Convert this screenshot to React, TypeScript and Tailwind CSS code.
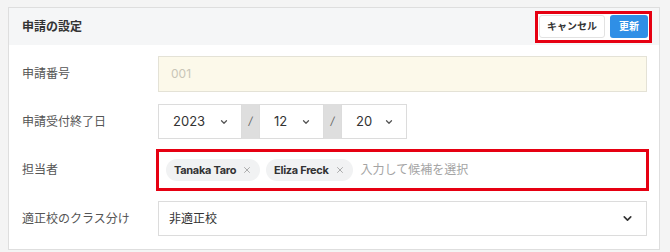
import { ChevronDown, X } from 'lucide-react';

const font = { fontFamily: 'Inter, "Noto Sans CJK JP", sans-serif' };

function DateSelect({ value, width }: { value: string; width: string }) {
    return (
        <div className={`${width} h-full flex items-center justify-between pl-[14px] pr-[12px] bg-white border border-[#dcdcdc] text-[13px] text-[#333]`}>
            <span>{value}</span>
            <ChevronDown className="h-[10px] w-[10px] text-[#555]" strokeWidth={3} />
        </div>
    );
}

function Slash() {
    return (
        <div className="w-[17px] h-full flex items-center justify-center bg-[#dedede] text-[11px] text-[#666] italic">/</div>
    );
}

function Tag({ name }: { name: string }) {
    return (
        <span className="h-[22px] flex items-center gap-[6px] pl-[8px] pr-[8px] rounded-full bg-[#f1f2f3] text-[11px] tracking-[-0.3px] font-bold text-[#333]">
            {name}
            <X className="h-[10px] w-[10px] text-[#888]" strokeWidth={1.6} />
        </span>
    );
}

export default function App() {
    const rows = 'flex items-center';
    return (
        <div style={font} className="w-[670px] h-[252px] bg-[#f4f4f4] pt-[7px] pl-[8px] pr-[10px] overflow-hidden">
            <div className="h-[243px] bg-white border border-[#dedede]">
                <div className="h-[37px] bg-[#f5f6f7] flex items-center justify-between pl-[13px] pr-[7px]">
                    <h1 className="text-[12px] font-bold text-[#333]">申請の設定</h1>
                    <div className="h-[32px] w-[117px] border-[3px] border-[#e60012] bg-white flex items-center gap-[5px] px-[1px]">
                        <button className="h-[23px] w-[66px] rounded-[3px] border border-[#e2e2e2] bg-white text-[10px] font-bold text-[#333]">キャンセル</button>
                        <button className="h-[23px] w-[38px] rounded-[3px] bg-[#2f8fe6] text-[10px] font-bold text-white">更新</button>
                    </div>
                </div>
                <div className="pl-[13px] pr-[12px] pt-[11px] flex flex-col">
                    <div className={`${rows} h-[36px]`}>
                        <span className="w-[136px] text-[12px] text-[#555]">申請番号</span>
                        <div className="flex-1 h-full bg-[#fcf9ea] border border-[#e4e2d6] flex items-center px-[12px] text-[12px] text-[#c9c6b8]">001</div>
                    </div>
                    <div className={`${rows} h-[35px] mt-[12px]`}>
                        <span className="w-[136px] text-[12px] text-[#555]">申請受付終了日</span>
                        <div className="flex h-full">
                            <DateSelect value="2023" width="w-[84px]" />
                            <Slash />
                            <DateSelect value="12" width="w-[65px]" />
                            <Slash />
                            <DateSelect value="20" width="w-[66px]" />
                        </div>
                    </div>
                    <div className={`${rows} h-[42px] mt-[10px]`}>
                        <span className="w-[134px] text-[12px] text-[#555]">担当者</span>
                        <div className="flex-1 h-full border-[3px] border-[#e60012] flex items-center gap-[6px] pl-[7px] mr-[-2px]">
                            <Tag name="Tanaka Taro" />
                            <Tag name="Eliza Freck" />
                            <span className="ml-[2px] text-[12px] text-[#a4a4a4]">入力して候補を選択</span>
                        </div>
                    </div>
                    <div className={`${rows} h-[35px] mt-[10px]`}>
                        <span className="w-[136px] text-[12px] text-[#555]">適正校のクラス分け</span>
                        <div className="flex-1 h-full bg-white border border-[#dcdcdc] flex items-center justify-between pl-[10px] pr-[12px] text-[12px] text-[#333]">
                            <span>非適正校</span>
                            <ChevronDown className="h-[13px] w-[13px] text-[#333]" strokeWidth={3} />
                        </div>
                    </div>
                </div>
            </div>
        </div>
    );
}
